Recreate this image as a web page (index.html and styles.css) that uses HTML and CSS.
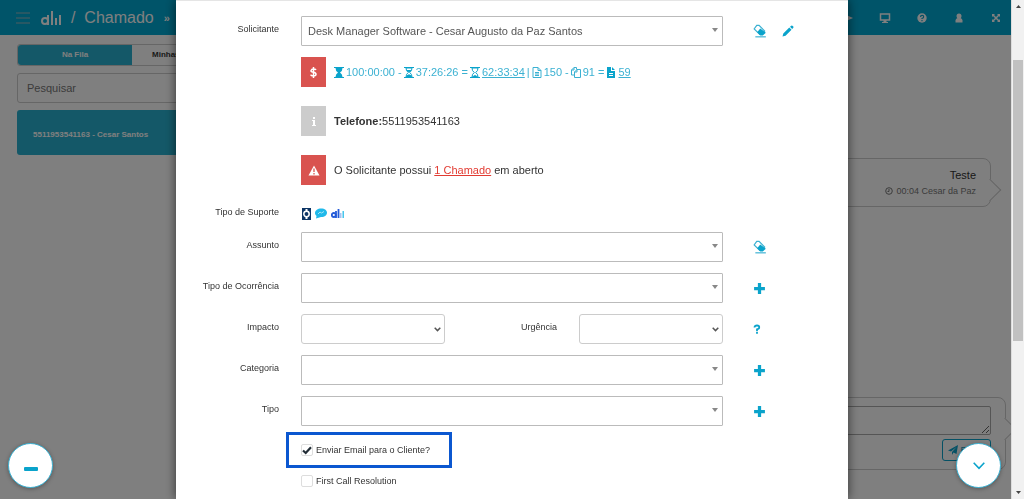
FILE: index.html
```html
<!DOCTYPE html>
<html lang="pt-BR">
<head>
<meta charset="utf-8">
<title>Chamado</title>
<link rel="stylesheet" href="styles.css">
</head>
<body>
<svg class="sprite" aria-hidden="true">
  <symbol id="eraser" viewBox="0 0 12 12"><path d="M3.200 1.200h2L10 6 7.800 9h-2L1 4.200z" fill="#fff" stroke="#3bb1d2"/><path d="M6.200 3.800 11 7.400 8.400 9.800H6.200L3.600 7z" fill="#0aa3cb"/><path d="M2 11h9" stroke="#3bb1d2"/></symbol>
  <symbol id="plus" viewBox="0 0 12 12"><path d="M4.500 1h3v3.500H11v3H7.500V11h-3V7.500H1v-3h3.500z" fill="#0aa3cb"/></symbol>
  <symbol id="pencil" viewBox="0 0 12 12"><path d="M0.500 11.500 1.300 8.500 7.300 2.500 9.500 4.700 3.500 10.700zM8 1.800 9.300.7q.6-.5 1.100 0l.9.9q.5.500 0 1.100L10.200 4z" fill="#0aa3cb"/></symbol>
  <symbol id="glass-top" viewBox="0 0 10 11"><path d="M0 .5h10M0 10.500h10" stroke="#0aa3cb"/><path d="M1.500 1h7q0 3-2.500 4.500Q8.500 7 8.500 10h-7Q1.500 7 4 5.500 1.500 4 1.500 1z" fill="#0aa3cb"/></symbol>
  <symbol id="glass-half" viewBox="0 0 10 11"><path d="M0 .5h10M0 10.500h10" stroke="#0aa3cb"/><path d="M2 1h6q0 3-2.300 4.500Q8 7 8 10H2q0-3 2.300-4.500Q2 4 2 1z" fill="#fff" stroke="#0aa3cb"/><path d="M2.500 3h5Q6.500 5 5 5.300 3.500 5 2.500 3zM2 10Q3 7.500 5 7.300 7 7.500 8 10z" fill="#0aa3cb"/></symbol>
  <symbol id="glass-empty" viewBox="0 0 10 11"><path d="M0 .5h10M0 10.500h10" stroke="#0aa3cb"/><path d="M2 1h6q0 3-2.300 4.500Q8 7 8 10H2q0-3 2.300-4.500Q2 4 2 1z" fill="#fff" stroke="#0aa3cb"/><path d="M3 10q0-1.500 2-2 2 .5 2 2z" fill="#0aa3cb"/></symbol>
  <symbol id="doc" viewBox="0 0 10 11"><path d="M1 .5h5l3 3v7H1zM6 .5v3h3M3 5.500h4M3 7h4M3 8.500h4" fill="none" stroke="#3bb1d2"/></symbol>
  <symbol id="copy" viewBox="0 0 10 11"><path d="M3.500 8H.5V3L3 .5h2.500v2M.5 3H3V.5M3.500 10.500V5L6 2.500h3.500v8zM3.500 5H6V2.500" fill="none" stroke="#3bb1d2"/></symbol>
  <symbol id="doc-full" viewBox="0 0 10 11"><path d="M1 0h4v4h4v7H1zM6 0l3 3H6z" fill="#0aa3cb"/><path d="M3 6.500h4M3 8.500h4" stroke="#fff"/></symbol>
</svg>

<div class="app">
  <header class="topbar">
    <button class="plain" aria-label="Menu"><svg width="14" height="12" viewBox="0 0 14 12"><path d="M0 1h14M0 6h14M0 11h14" stroke="#9fb9bf"/></svg></button>
    <svg class="logo" width="20" height="14" viewBox="0 0 20 14" fill="none" stroke="#fff" stroke-width="2"><circle cx="4" cy="10" r="3"/><path d="M7 4v10M11 0v14M15 7v7M19 4v10"/></svg>
    <span class="title">/&nbsp; Chamado</span><span class="crumb">»</span>
    <nav class="tools">
      <button class="plain" aria-label="Iniciar"><svg width="12" height="12" viewBox="0 0 12 12"><path d="M2 2l9 4-9 4z" fill="#fff"/></svg></button>
      <button class="plain" aria-label="Tela"><svg width="12" height="12" viewBox="0 0 12 12"><path d="M1.500 2h9v6h-9z" fill="none" stroke="#fff" stroke-width="1.500"/><path d="M4.500 8h3v2H9v1H3v-1h1.500z" fill="#fff"/></svg></button>
      <button class="plain" aria-label="Ajuda"><svg width="12" height="12" viewBox="0 0 12 12"><circle cx="6" cy="6" r="4.700" fill="#fff"/><path d="M4.500 5q0-1.700 1.600-1.700T7.600 5Q7.600 6 6 6.500V7M6 8v1.200" fill="none" stroke="#0aa3cb" stroke-width="1.200"/></svg></button>
      <button class="plain" aria-label="Usuário"><svg width="12" height="12" viewBox="0 0 12 12"><circle cx="6" cy="4" r="2.500" fill="#fff"/><path d="M2.500 10.500V8.500Q2.500 6.500 4.500 6h3q2 .5 2 2.500v2z" fill="#fff"/></svg></button>
      <button class="plain" aria-label="Expandir"><svg width="12" height="12" viewBox="0 0 12 12"><path d="M2 2h3L2 5zM10 2v3L7 2zM2 10V7l3 3zM10 10H7l3-3z" fill="#fff"/><path d="M3 3l6 6M9 3L3 9" stroke="#fff" stroke-width="1.500"/></svg></button>
    </nav>
  </header>
  <div class="work">
    <aside class="queue">
      <div class="tabs"><button class="tab active">Na Fila</button><button class="tab mine">Minhas</button></div>
      <input class="search" type="text" placeholder="Pesquisar" aria-label="Pesquisar">
      <button class="contact">5511953541163 - Cesar Santos</button>
    </aside>
    <main class="chat">
      <article class="bubble">
        <p class="message">Teste</p>
        <p class="meta"><svg width="8" height="8" viewBox="0 0 8 8" fill="none" stroke="#777"><circle cx="4" cy="4" r="3.300"/><path d="M4 2v2.500H2.500"/></svg> 00:04 Cesar da Paz</p>
      </article>
      <form class="composer">
        <textarea class="reply" aria-label="Mensagem"></textarea>
        <button class="send" type="button"><svg width="10" height="10" viewBox="0 0 10 10"><path d="M10 0 8.500 9 5.500 7.500 4 10V7L8.500 2 3 6.500 0 5.500z" fill="#0aa3cb"/></svg>Enviar</button>
      </form>
    </main>
  </div>
</div>

<div class="backdrop">
  <section class="dialog" role="dialog" aria-label="Novo chamado">
    <form class="form">
      <div class="row">
        <label class="label" for="sol">Solicitante</label>
        <div class="picker"><select id="sol"><option>Desk Manager Software - Cesar Augusto da Paz Santos</option></select></div>
        <div class="actions"><button class="plain" type="button" aria-label="Limpar"><svg width="14" height="14"><use href="#eraser"/></svg></button><button class="plain" type="button" aria-label="Editar"><svg width="12" height="12"><use href="#pencil"/></svg></button></div>
      </div>
      <div class="notes">
        <div class="note"><span class="badge red"><svg width="9" height="13" viewBox="0 0 9 13"><path d="M7 4Q6.500 3 4.500 3T2 4.700Q2 6 4.500 6.300T7 8.300Q7 10 4.500 10T1.800 8.700M4.500 1v11" fill="none" stroke="#fff" stroke-width="1.500"/></svg></span>
          <p class="blue"><svg width="10" height="11"><use href="#glass-top"/></svg> 100:00:00 - <svg width="10" height="11"><use href="#glass-half"/></svg> 37:26:26 = <svg width="10" height="11"><use href="#glass-empty"/></svg> <a href="#horas">62:33:34</a> | <svg width="10" height="11"><use href="#doc"/></svg> 150 - <svg width="10" height="11"><use href="#copy"/></svg> 91 = <svg width="10" height="11"><use href="#doc-full"/></svg> <a href="#saldo">59</a></p></div>
        <div class="note"><span class="badge gray"><svg width="4" height="9" viewBox="0 0 4 9"><path d="M1 0h2v2H1zM0 3h3v5h1v1H0V8h1V4H0z" fill="#fff"/></svg></span><p><b>Telefone:</b>5511953541163</p></div>
        <div class="note"><span class="badge red"><svg width="12" height="11" viewBox="0 0 12 11"><path d="M6 0.500 11.500 10.500H.5z" fill="#fff"/><path d="M6 3.500v3.500M6 8v1.500" stroke="#d9534f" stroke-width="1.300"/></svg></span><p>O Solicitante possui <a class="alert" href="#abertos">1 Chamado</a> em aberto</p></div>
      </div>
      <div class="row support">
        <span class="label">Tipo de Suporte</span>
        <div class="channels">
          <svg width="9" height="12" viewBox="0 0 9 12"><path d="M0 0h9v12H0z" fill="#0d3565"/><path d="M4.500 1v10" stroke="#fff" stroke-width="2"/><circle cx="4.500" cy="6" r="2.700" fill="#0d3565" stroke="#fff" stroke-width="1.500"/></svg>
          <svg width="12" height="11" viewBox="0 0 12 11"><path d="M6 .5c8 0 8 8.500 0 8.500L1 10.500 1.500 8C-2 5 1 .5 6 .5z" fill="#20b9ea"/><path d="M3 6l2-2 1.500 1L9 3.500" fill="none" stroke="#a5e4f7"/></svg>
          <svg width="13" height="9" viewBox="0 0 13 9" fill="none" stroke="#245bd8" stroke-width="1.800"><circle cx="2.800" cy="6" r="2"/><path d="M5 2v7M7.500 0v9"/><path d="M9.800 4v5" stroke="#9eb8ed" stroke-width="1.300"/><path d="M12.200 2v7" stroke="#28bcea" stroke-width="1.300"/></svg>
        </div>
      </div>
      <div class="row">
        <label class="label" for="ass">Assunto</label><div class="picker"><select id="ass"></select></div>
        <div class="actions"><button class="plain" type="button" aria-label="Limpar"><svg width="14" height="14"><use href="#eraser"/></svg></button></div>
      </div>
      <div class="row">
        <label class="label" for="oco">Tipo de Ocorrência</label><div class="picker"><select id="oco"></select></div>
        <div class="actions"><button class="plain" type="button" aria-label="Adicionar"><svg width="13" height="13"><use href="#plus"/></svg></button></div>
      </div>
      <div class="row">
        <label class="label" for="imp">Impacto</label>
        <div class="pair">
          <div class="drop"><select id="imp"></select><svg width="7" height="5" viewBox="0 0 7 5"><path d="M.7.800 3.500 3.600 6.300.8" fill="none" stroke="#555" stroke-width="1.500"/></svg></div>
          <label class="label" for="urg">Urgência</label>
          <div class="drop"><select id="urg"></select><svg width="7" height="5" viewBox="0 0 7 5"><path d="M.7.800 3.500 3.600 6.300.8" fill="none" stroke="#555" stroke-width="1.500"/></svg></div>
        </div>
        <div class="actions"><button class="plain" type="button" aria-label="Ajuda"><svg width="8" height="12" viewBox="0 0 8 12"><path d="M1.500 4.500Q1.500 2.500 4 2.500t2.200 2Q6.200 6 4 6.300V8M4 8.800v2" fill="none" stroke="#0aa3cb" stroke-width="1.800"/></svg></button></div>
      </div>
      <div class="row">
        <label class="label" for="cat">Categoria</label><div class="picker"><select id="cat"></select></div>
        <div class="actions"><button class="plain" type="button" aria-label="Adicionar"><svg width="13" height="13"><use href="#plus"/></svg></button></div>
      </div>
      <div class="row">
        <label class="label" for="tip">Tipo</label><div class="picker"><select id="tip"></select></div>
        <div class="actions"><button class="plain" type="button" aria-label="Adicionar"><svg width="13" height="13"><use href="#plus"/></svg></button></div>
      </div>
      <div class="checks">
        <div class="highlight"><label class="check"><input type="checkbox" checked><svg class="tick" width="12" height="12" viewBox="0 0 12 12"><path d="M2 6.500 4.700 9 10 3.300" fill="none" stroke="#222d36" stroke-width="2.200"/></svg>Enviar Email para o Cliente?</label></div>
        <label class="check"><input type="checkbox"><svg class="tick" width="12" height="12" viewBox="0 0 12 12"><path d="M2 6.500 4.700 9 10 3.300" fill="none" stroke="#222d36" stroke-width="2.200"/></svg>First Call Resolution</label>
      </div>
    </form>
  </section>
</div>

<button class="fab left" aria-label="Minimizar"><svg width="14" height="4"><rect width="14" height="4" rx="1" fill="#0aa3cb"/></svg></button>
<button class="fab right" aria-label="Descer"><svg width="12" height="8" viewBox="0 0 12 8"><path d="M.7.800 6 6.300 11.300.8" fill="none" stroke="#0aa3cb" stroke-width="1.600"/></svg></button>

<div class="scrollbar" aria-hidden="true">
  <svg width="13" height="13" viewBox="0 0 13 13"><path d="M4 8 6.500 5 9 8z" fill="#444"/></svg>
  <div class="track"><div class="thumb"></div></div>
  <svg width="13" height="13" viewBox="0 0 13 13"><path d="M4 5 6.500 8 9 5z" fill="#444"/></svg>
</div>
</body>
</html>
```
FILE: styles.css
```css
* { box-sizing: border-box; }
html, body { height: 100%; }
body { margin: 0; overflow: hidden; background: #fff; color: #333; font: 11px/16px "Liberation Sans", Arial, sans-serif; }
p { margin: 0; }
svg { display: block; flex: none; }
button, input, select, textarea { font: inherit; color: inherit; margin: 0; }
.sprite { position: absolute; width: 0; height: 0; }
.plain { border: 0; background: none; padding: 0; }

.app { height: 100%; margin-right: 13px; display: flex; flex-direction: column; }
.topbar { height: 35px; flex: none; background: #00a8d2; color: #fff; display: flex; align-items: center; padding: 0 9px 0 16px; }
.logo { margin: 0 10px 0 11px; }
.title { font-size: 16px; line-height: 20px; }
.crumb { margin-left: 10px; font-weight: bold; }
.tools { margin-left: auto; display: flex; gap: 25px; }
.work { flex: 1; min-height: 0; display: grid; grid-template-columns: 262px 1fr; }
.queue { padding: 9px 0 0 17px; display: flex; flex-direction: column; gap: 7px; }
.tabs { display: grid; grid-template-columns: 1fr 1fr; width: 230px; height: 22px; border: 1px solid #ccc; border-radius: 3px; }
.tab { border: 0; padding: 0; background: none; font-size: 8px; font-weight: bold; }
.tab.active { background: #28b1d0; color: #fff; border-radius: 3px 0 0 3px; }
.tab.mine { padding-left: 20px; text-align: left; }
.search { height: 30px; padding: 0 9px; border: 1px solid #ccc; border-radius: 3px; background: #fff; }
.search::placeholder { color: #777; opacity: 1; }
.contact { height: 45px; border: 0; border-radius: 3px; padding: 4px 16px 0; background: #28b1d0; color: #fff; font-size: 8px; font-weight: bold; text-align: left; }
.chat { display: flex; flex-direction: column; justify-content: space-between; padding: 123px 5px 29px 0; }
.bubble, .composer { position: relative; border: 1px solid #ccc; border-radius: 8px; }
.bubble { margin-right: 15px; padding: 8px 14px 7px; text-align: right; color: #777; }
.message { color: #333; }
.meta { display: flex; justify-content: flex-end; align-items: center; gap: 3px; font-size: 9px; }
.bubble::after, .composer::after { content: ""; position: absolute; right: -8px; top: 23px; width: 15px; height: 15px; background: #fff; border: 1px solid #ccc; border-width: 1px 1px 0 0; transform: rotate(45deg); }
.composer { height: 73px; padding: 8px 14px; display: flex; flex-direction: column; align-items: flex-end; gap: 4px; }
.reply { width: 100%; height: 29px; border: 1px solid #aaa; border-radius: 2px; background: #fff; }
.send { height: 22px; padding: 0 4px 0 5px; border: 1px solid #0aa3cb; border-radius: 3px; background: none; color: #0aa3cb; display: flex; align-items: center; gap: 2px; font-size: 9px; }

.backdrop { position: fixed; inset: 0 13px 0 0; background: rgba(0, 0, 0, .5); overflow: hidden; display: flex; justify-content: center; }
.dialog { width: 672px; max-width: 100%; margin-left: 13px; background: #fff; border-top: 1px solid #e5e5e5; box-shadow: 0 0 10px rgba(0, 0, 0, .6); min-height: 100%; }
.form { padding: 15px 43px 0 22px; }
.row { display: grid; grid-template-columns: 81px 1fr 60px; margin-bottom: 11px; column-gap: 22px; align-items: start; }
.row .actions { padding-left: 8px; }
.label { font-size: 9px; line-height: 14px; padding-top: 6px; text-align: right; white-space: nowrap; }
.picker, .drop { position: relative; height: 30px; }
.picker select, .drop select { appearance: none; width: 100%; height: 100%; background: #fff; border: 1px solid #bbb; border-radius: 1px; padding: 0 6px; color: #555; }
.drop select { border-color: #ccc; border-radius: 3px; }
.picker::after { content: ""; position: absolute; right: 5px; top: 12px; border: 3px solid transparent; border-top: 4px solid #888; border-bottom: 0; pointer-events: none; }
.drop svg { position: absolute; right: 4px; top: 13px; pointer-events: none; }
.pair { display: grid; grid-template-columns: 144px 1fr 144px; column-gap: 22px; }
.actions { display: flex; align-items: center; height: 30px; gap: 15px; }
.notes { margin-left: 103px; display: flex; flex-direction: column; gap: 19px; }
.note { display: flex; align-items: center; gap: 8px; height: 30px; }
.badge { width: 25px; height: 30px; display: flex; align-items: center; justify-content: center; }
.red { background: #d9534f; }
.gray { background: #ccc; }
.blue { display: flex; align-items: center; gap: 2px; color: #3bb1d2; white-space: nowrap; }
a { color: inherit; }
.alert { color: #e23b32; }
.support { margin: 14px 0 8px; height: 25px; }
.channels { display: flex; align-items: center; gap: 4px; height: 29px; padding-left: 1px; }
.checks { margin: -5px 0 0 88px; display: flex; flex-direction: column; align-items: flex-start; gap: 6px; }
.highlight { border: 3px solid #0b57d0; width: 166px; height: 36px; display: flex; align-items: center; }
.check { display: flex; align-items: center; gap: 3px; font-size: 9px; line-height: 14px; position: relative; padding-left: 12px; white-space: nowrap; }
.checks > .check { padding-left: 15px; }
.check input { appearance: none; width: 12px; height: 12px; border: 1px solid #ddd; border-radius: 2px; }
.tick { position: absolute; visibility: hidden; }
.check input:checked + .tick { visibility: visible; }

.fab { position: fixed; bottom: 11px; width: 45px; height: 45px; border: 1px solid #3bb1d2; border-radius: 50%; background: #fff; padding: 0; display: flex; align-items: center; justify-content: center; box-shadow: 0 1px 4px rgba(0, 0, 0, .3); }
.fab.left { left: 8px; padding-top: 6px; }
.fab.right { right: 23px; }
.scrollbar { position: fixed; inset: 0 0 0 auto; width: 13px; background: #f1f1f1; border-left: 1px solid #ddd; display: flex; flex-direction: column; align-items: center; }
.track { flex: 1; width: 100%; padding: 47px 1px 0; }
.thumb { height: 66%; background: #c1c1c1; }
```
